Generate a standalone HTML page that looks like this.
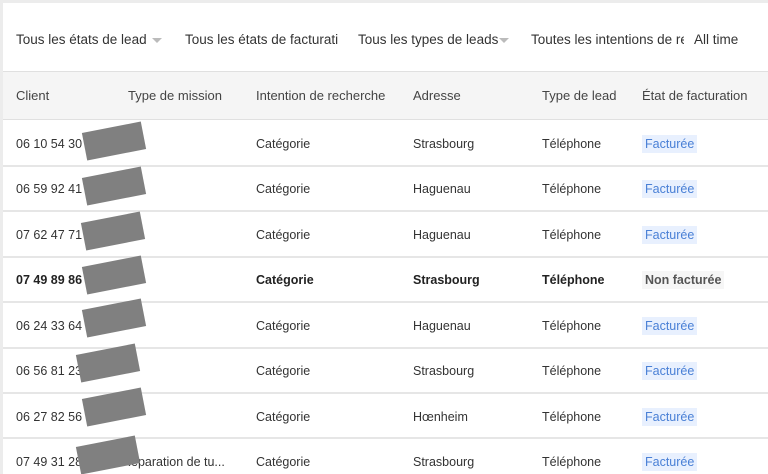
<!DOCTYPE html>
<html><head><meta charset="utf-8"><style>
*{margin:0;padding:0;box-sizing:border-box}
body{width:768px;height:474px;overflow:hidden;background:#fff;font-family:"Liberation Sans",Arial,sans-serif;color:#222;position:relative}
.top{position:absolute;left:0;top:0;width:768px;height:3px;background:#ececec}
.lb{position:absolute;left:0;top:3px;width:3px;height:471px;background:#ececec}
.f{position:absolute;top:32px;font-size:13.5px;color:#333;white-space:nowrap}
.arr{display:inline-block;width:0;height:0;border-left:5px solid transparent;border-right:5px solid transparent;border-top:5px solid #bbb;vertical-align:middle;margin-left:5px}
.hdr{position:absolute;left:3px;top:71px;width:765px;height:49px;background:#f5f5f5;border-top:1px solid #e0e0e0;border-bottom:1px solid #e0e0e0}
.h{position:absolute;top:88px;font-size:13px;color:#444;white-space:nowrap}
.line{position:absolute;left:3px;width:765px;height:2px;background:#e6e6e6}
.c{position:absolute;font-size:12.5px;color:#333;white-space:nowrap;margin-top:2px}
.b{font-weight:bold;color:#222}
.badge{position:absolute;font-size:12.5px;color:#4a80d6;background:#e8f0fe;padding:2px 3px;white-space:nowrap;margin-top:2px}
.nb{position:absolute;font-size:12.5px;color:#555;background:#f6f6f6;padding:2px 3px;font-weight:bold;white-space:nowrap;margin-top:2px}
.red{position:absolute;width:60px;height:28px;background:#808080;transform:rotate(-11deg)}
</style></head><body>
<div class="top"></div><div class="lb"></div>
<div class="f" style="left:16px">Tous les états de lead<span class="arr"></span></div>
<div class="f" style="left:185px;width:153px;overflow:hidden">Tous les états de facturation</div>
<div class="f" style="left:358px">Tous les types de leads<span class="arr" style="margin-left:1px"></span></div>
<div class="f" style="left:531px;width:153px;overflow:hidden">Toutes les intentions de recherche</div>
<div class="f" style="left:694px">All time</div>
<div class="hdr"></div>
<div class="h" style="left:16px">Client</div>
<div class="h" style="left:128px">Type de mission</div>
<div class="h" style="left:256px">Intention de recherche</div>
<div class="h" style="left:413px">Adresse</div>
<div class="h" style="left:542px">Type de lead</div>
<div class="h" style="left:642px">État de facturation</div>

<div class="line" style="top:165px"></div>
<div class="line" style="top:210px"></div>
<div class="line" style="top:256px"></div>
<div class="line" style="top:301px"></div>
<div class="line" style="top:347px"></div>
<div class="line" style="top:392px"></div>
<div class="line" style="top:437px"></div>

<div class="c" style="left:16px;top:135px">06 10 54 30</div><div class="c" style="left:256px;top:135px">Catégorie</div><div class="c" style="left:413px;top:135px">Strasbourg</div><div class="c" style="left:542px;top:135px">Téléphone</div><div class="badge" style="left:642px;top:133px">Facturée</div>
<div class="c" style="left:16px;top:180px">06 59 92 41 5</div><div class="c" style="left:256px;top:180px">Catégorie</div><div class="c" style="left:413px;top:180px">Haguenau</div><div class="c" style="left:542px;top:180px">Téléphone</div><div class="badge" style="left:642px;top:178px">Facturée</div>
<div class="c" style="left:16px;top:226px">07 62 47 71 0</div><div class="c" style="left:256px;top:226px">Catégorie</div><div class="c" style="left:413px;top:226px">Haguenau</div><div class="c" style="left:542px;top:226px">Téléphone</div><div class="badge" style="left:642px;top:224px">Facturée</div>
<div class="c b" style="left:16px;top:271px">07 49 89 86</div><div class="c b" style="left:256px;top:271px">Catégorie</div><div class="c b" style="left:413px;top:271px">Strasbourg</div><div class="c b" style="left:542px;top:271px">Téléphone</div><div class="nb" style="left:642px;top:269px">Non facturée</div>
<div class="c" style="left:16px;top:317px">06 24 33 64</div><div class="c" style="left:256px;top:317px">Catégorie</div><div class="c" style="left:413px;top:317px">Haguenau</div><div class="c" style="left:542px;top:317px">Téléphone</div><div class="badge" style="left:642px;top:315px">Facturée</div>
<div class="c" style="left:16px;top:362px">06 56 81 23</div><div class="c" style="left:256px;top:362px">Catégorie</div><div class="c" style="left:413px;top:362px">Strasbourg</div><div class="c" style="left:542px;top:362px">Téléphone</div><div class="badge" style="left:642px;top:360px">Facturée</div>
<div class="c" style="left:16px;top:408px">06 27 82 56 1</div><div class="c" style="left:256px;top:408px">Catégorie</div><div class="c" style="left:413px;top:408px">Hœnheim</div><div class="c" style="left:542px;top:408px">Téléphone</div><div class="badge" style="left:642px;top:406px">Facturée</div>
<div class="c" style="left:16px;top:453px">07 49 31 28</div><div class="c" style="left:122px;top:453px">Réparation de tu...</div><div class="c" style="left:256px;top:453px">Catégorie</div><div class="c" style="left:413px;top:453px">Strasbourg</div><div class="c" style="left:542px;top:453px">Téléphone</div><div class="badge" style="left:642px;top:451px">Facturée</div>

<div class="red" style="left:84px;top:127px"></div>
<div class="red" style="left:84px;top:172px"></div>
<div class="red" style="left:83px;top:217px"></div>
<div class="red" style="left:84px;top:261px"></div>
<div class="red" style="left:84px;top:304px"></div>
<div class="red" style="left:78px;top:349px"></div>
<div class="red" style="left:84px;top:393px"></div>
<div class="red" style="left:78px;top:441px"></div>
</body></html>
